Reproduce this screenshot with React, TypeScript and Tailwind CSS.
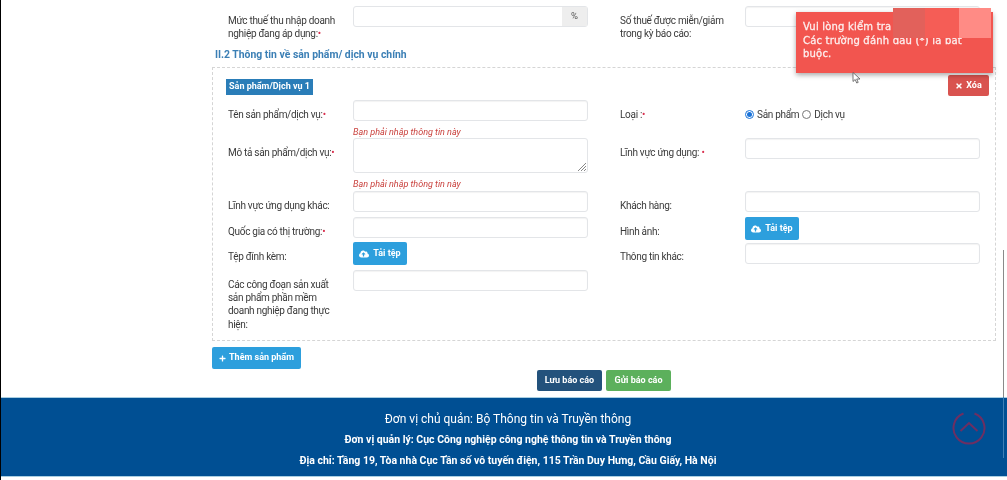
import type { ReactNode } from "react";
import { FaCloudUploadAlt, FaPlus, FaTimes } from "react-icons/fa";

const inputCls =
  "block w-[235px] h-[21px] bg-white border border-[#e3e5e8] rounded-[3px] shadow-[inset_0_1px_1px_rgba(0,0,0,0.05)]";

const Req = () => <span className="text-[#d9304f]">•</span>;

const Label = ({ children }: { children: ReactNode }) => (
  <div className="w-[125px] shrink-0 pt-[7.5px] pr-[15px] text-[10px] leading-[13.4px] tracking-[-0.3px] text-[#3a3a3a]">
    {children}
  </div>
);

const Input = () => <div className={inputCls} />;

const UploadButton = () => (
  <button className="flex h-[23px] w-[54px] items-center justify-center gap-[4px] rounded-[2px] bg-[#2d9fdd] text-[9px] font-bold text-white">
    <FaCloudUploadAlt className="text-[10px]" />
    Tải tệp
  </button>
);

const Row = ({
  height,
  left,
  right,
}: {
  height: number;
  left: ReactNode;
  right: ReactNode;
}) => (
  <div className="flex" style={{ height }}>
    <div className="flex w-[392px]">{left}</div>
    <div className="flex">{right}</div>
  </div>
);

const Error = () => (
  <div className="mt-[6px] text-[9px] leading-[11px] italic text-[#c9403c]">
    Bạn phải nhập thông tin này
  </div>
);

const Radio = ({ checked }: { checked?: boolean }) => (
  <span
    className={`inline-flex h-[9px] w-[9px] items-center justify-center rounded-full border ${
      checked ? "border-[#1a73d9]" : "border-[#777]"
    }`}
  >
    {checked && <span className="h-[5px] w-[5px] rounded-full bg-[#1a73d9]" />}
  </span>
);

export default function App() {
  return (
    <div className="relative h-[480px] w-[1007px] overflow-hidden border-l border-black bg-white font-['Roboto',sans-serif] blur-[0.4px]">
      <div className="pl-[211px] pt-[6px]">
        <div className="pl-[16px]">
          <Row
            height={42}
            left={
              <>
                <Label>
                  Mức thuế thu nhập doanh nghiệp đang áp dụng:
                  <Req />
                </Label>
                <div className="flex h-[21px] w-[235px] rounded-[3px] border border-[#e3e5e8]">
                  <div className="flex-1" />
                  <div className="flex w-[25px] items-center justify-center bg-[#eeeeee] text-[9.5px] text-[#555]">
                    %
                  </div>
                </div>
              </>
            }
            right={
              <>
                <Label>Số thuế được miễn/giảm trong kỳ báo cáo:</Label>
                <Input />
              </>
            }
          />
        </div>

        <h3 className="h-[13px] pl-[3px] text-[10.4px] leading-[13px] font-bold text-[#3b7fb5]">
          II.2 Thông tin về sản phẩm/ dịch vụ chính
        </h3>

        <div className="mt-[6px] h-[274px] w-[784px] border border-dashed border-[#d5d5d5] pt-[7px] pl-[15px]">
          <div className="flex h-[25px] justify-between pr-[6px]">
            <div className="mt-[4px] -ml-[2px] flex h-[16px] w-[87px] items-center justify-center bg-[#2a7db8] text-[9px] font-bold text-white">
              Sản phẩm/Dịch vụ 1
            </div>
            <button className="flex h-[21px] w-[41px] items-center justify-center gap-[3px] rounded-[2px] bg-[#d9534f] text-[9px] font-bold text-white">
              <FaTimes className="text-[8px]" />
              Xóa
            </button>
          </div>

          <Row
            height={38}
            left={
              <>
                <Label>
                  Tên sản phẩm/dịch vụ:
                  <Req />
                </Label>
                <div>
                  <Input />
                  <Error />
                </div>
              </>
            }
            right={
              <>
                <Label>
                  Loại :
                  <Req />
                </Label>
                <div className="flex h-[28px] items-center gap-[3px] text-[10px] tracking-[-0.3px] text-[#3a3a3a]">
                  <Radio checked />
                  <span>Sản phẩm</span>
                  <Radio />
                  <span>Dịch vụ</span>
                </div>
              </>
            }
          />
          <Row
            height={53}
            left={
              <>
                <Label>
                  Mô tả sản phẩm/dịch vụ:
                  <Req />
                </Label>
                <div>
                  <div className="relative h-[35px] w-[235px] rounded-[3px] border border-[#e3e5e8]">
                    <svg
                      className="absolute right-[1px] bottom-[1px]"
                      width="9"
                      height="9"
                      viewBox="0 0 9 9"
                    >
                      <path d="M1 9 9 1M4 9l5-5M7 9l2-2" stroke="#888" strokeWidth="1" />
                    </svg>
                  </div>
                  <Error />
                </div>
              </>
            }
            right={
              <>
                <Label>
                  Lĩnh vực ứng dụng: <Req />
                </Label>
                <Input />
              </>
            }
          />
          <Row
            height={26}
            left={
              <>
                <Label>Lĩnh vực ứng dụng khác:</Label>
                <Input />
              </>
            }
            right={
              <>
                <Label>Khách hàng:</Label>
                <Input />
              </>
            }
          />
          <Row
            height={25}
            left={
              <>
                <Label>
                  Quốc gia có thị trường:
                  <Req />
                </Label>
                <Input />
              </>
            }
            right={
              <>
                <Label>Hình ảnh:</Label>
                <UploadButton />
              </>
            }
          />
          <Row
            height={28}
            left={
              <>
                <Label>Tệp đính kèm:</Label>
                <UploadButton />
              </>
            }
            right={
              <>
                <Label>Thông tin khác:</Label>
                <div className="pt-[1px]">
                  <Input />
                </div>
              </>
            }
          />
          <Row
            height={60}
            left={
              <>
                <Label>Các công đoạn sản xuất sản phẩm phần mềm doanh nghiệp đang thực hiện:</Label>
                <Input />
              </>
            }
            right={null}
          />
        </div>

        <button className="mt-[6px] flex h-[22px] w-[89px] items-center justify-center gap-[3px] rounded-[2px] bg-[#2d9fdd] text-[9px] font-bold text-white">
          <FaPlus className="text-[7px]" />
          Thêm sản phẩm
        </button>

        <div className="mt-[1px] flex w-[784px] justify-center gap-[4px]">
          <button className="h-[21px] w-[65px] rounded-[2px] bg-[#23527c] text-[9px] font-bold text-white">
            Lưu báo cáo
          </button>
          <button className="h-[21px] w-[65px] rounded-[2px] bg-[#5cb05c] text-[9px] font-bold text-white">
            Gửi báo cáo
          </button>
        </div>
      </div>

      <footer className="relative mt-[6px] flex h-[80px] flex-col items-center border-y border-[#a9cfe2] bg-[#004f93] pt-[13px] pl-[8px] text-white">
        <div className="text-[12px] leading-[16px]">Đơn vị chủ quản: Bộ Thông tin và Truyền thông</div>
        <div className="mt-[6px] text-[10.5px] leading-[14px] font-bold">
          Đơn vị quản lý: Cục Công nghiệp công nghệ thông tin và Truyền thông
        </div>
        <div className="mt-[7px] text-[10.5px] leading-[14px] font-bold">
          Địa chỉ: Tầng 19, Tòa nhà Cục Tần số vô tuyến điện, 115 Trần Duy Hưng, Cầu Giấy, Hà Nội
        </div>
        <svg
          className="absolute top-[13px] left-[951px]"
          width="34"
          height="34"
          viewBox="0 0 34 34"
          fill="none"
          stroke="#6e2f62"
          strokeWidth="2"
        >
          <path d="M11.5 2.500a15.500 15.500 0 1 0 11 0" />
          <path d="M8.500 20 17 12l8.500 8" />
        </svg>
      </footer>

      {/* scrollbar sliver at the right edge */}
      <div className="absolute top-[250px] left-[1002px] h-[147px] w-[1px] bg-[#8a8a8a]" />
      <div className="absolute top-[397px] left-[1002px] h-[61px] w-[1px] bg-[#3f7fb5]" />

      {/* toast */}
      <div className="absolute top-[12px] left-[795px] h-[61px] w-[197px] bg-[#f2554f] pt-[8px] pr-[24px] pl-[7px] font-['DejaVu_Sans',sans-serif] text-[10px] leading-[13.5px] tracking-[0.2px] text-[#fdeeed] [-webkit-text-stroke:0.3px_#fdeeed] shadow-[0_2px_5px_rgba(0,0,0,0.35)]">
        Vui lòng kiểm tra
        <br />
        Các trường đánh dấu (*) là bắt buộc.
      </div>
      <div className="absolute top-[8px] left-[892px] flex h-[30px] w-[98px]">
        <div className="w-[32px] bg-[#e2615b]" />
        <div className="w-[34px] bg-[#f55d56]" />
        <div className="w-[32px] bg-[#ff8b85]" />
      </div>

      {/* mouse cursor */}
      <svg className="absolute top-[72px] left-[851px]" width="9" height="12" viewBox="0 0 9 12">
        <path d="M1 .5v9l2.200-2 1.500 3.500 1.500-.6-1.500-3.400H8z" fill="#fff" stroke="#555" strokeWidth=".8" />
      </svg>
    </div>
  );
}
